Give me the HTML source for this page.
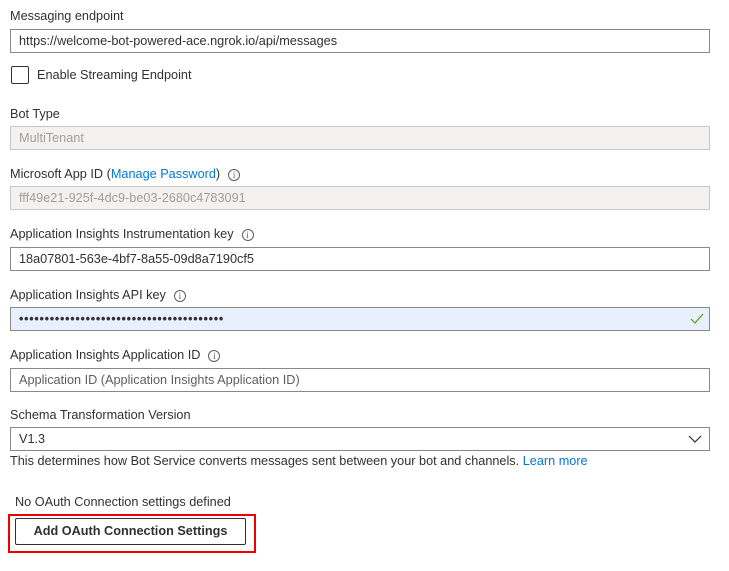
<!DOCTYPE html>
<html><head><meta charset="utf-8"><style>
body{margin:0;width:729px;height:571px;background:#fff;font-family:"Liberation Sans",sans-serif;font-size:12.7px;color:#323130;position:relative;overflow:hidden}
.a{position:absolute;white-space:nowrap}
.l{left:10px;line-height:16px}
.in{position:absolute;left:10px;width:698px;height:22px;border:1px solid #8a8886;background:#fff;box-sizing:content-box;line-height:22px;padding:0;text-indent:8px;white-space:nowrap;overflow:hidden}
.dis{background:#f3f2f1;border-color:#c8c6c4;color:#a19f9d}
.i{display:inline-block;width:10px;height:10px;border:1px solid #605e5c;border-radius:50%;font-size:9px;line-height:10px;text-align:center;vertical-align:middle;margin-left:8px;color:#605e5c;font-family:"Liberation Serif",serif}
a{color:#0078d4;text-decoration:none}
</style></head><body>
<div class="a l" style="top:8px">Messaging endpoint</div>
<div class="in" style="top:29px">https://welcome-bot-powered-ace.ngrok.io/api/messages</div>
<div class="a" style="left:11px;top:66px;width:16px;height:16px;border:1px solid #323130;border-radius:2px"></div>
<div class="a" style="left:37px;top:67px;line-height:16px">Enable Streaming Endpoint</div>
<div class="a l" style="top:106px">Bot Type</div>
<div class="in dis" style="top:126px">MultiTenant</div>
<div class="a l" style="top:166px">Microsoft App ID (<a>Manage Password</a>)<span class="i">i</span></div>
<div class="in dis" style="top:186px">fff49e21-925f-4dc9-be03-2680c4783091</div>
<div class="a l" style="top:226px">Application Insights Instrumentation key<span class="i">i</span></div>
<div class="in" style="top:247px">18a07801-563e-4bf7-8a55-09d8a7190cf5</div>
<div class="a l" style="top:287px">Application Insights API key<span class="i">i</span></div>
<div class="in" style="top:307px;background:#e8f0fe;font-size:12.5px;font-weight:bold;letter-spacing:0.75px">••••••••••••••••••••••••••••••••••••••••</div>
<svg class="a" style="left:690px;top:313px" width="14" height="12"><path d="M1 6 L5 10 L13 1" stroke="#57a300" stroke-width="1.2" fill="none"/></svg>
<div class="a l" style="top:347px">Application Insights Application ID<span class="i">i</span></div>
<div class="in" style="top:368px;color:#605e5c">Application ID (Application Insights Application ID)</div>
<div class="a l" style="top:407px">Schema Transformation Version</div>
<div class="in" style="top:427px">V1.3</div>
<svg class="a" style="left:688px;top:434px" width="14" height="10"><path d="M1 2 L7 8 L13 2" stroke="#323130" stroke-width="1.2" fill="none"/></svg>
<div class="a l" style="top:453px">This determines how Bot Service converts messages sent between your bot and channels. <a>Learn more</a></div>
<div class="a" style="left:15px;top:494px;line-height:16px">No OAuth Connection settings defined</div>
<div class="a" style="left:8px;top:514px;width:244px;height:35px;border:2px solid #e00"></div>
<div class="a" style="left:15px;top:518px;width:229px;height:25px;border:1px solid #323130;border-radius:2px;text-align:center;line-height:25px;font-weight:bold;color:#323130">Add OAuth Connection Settings</div>
</body></html>
